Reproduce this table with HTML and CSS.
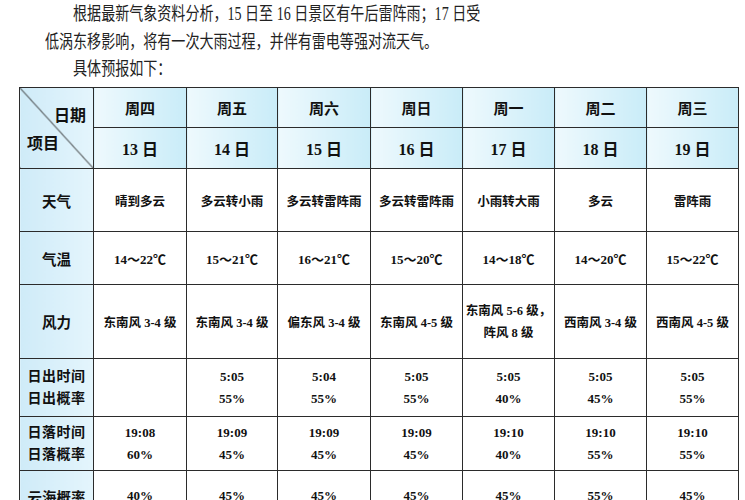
FILE: index.html
```html
<!DOCTYPE html>
<html lang="zh-CN">
<head>
<meta charset="utf-8">
<title>景区天气预报</title>
<link rel="stylesheet" href="styles.css">
</head>
<body>
<div class="intro">
  <p class="para">根据最新气象资料分析，15 日至 16 日景区有午后雷阵雨；17 日受<br>低涡东移影响，将有一次大雨过程，并伴有雷电等强对流天气。</p>
  <p class="para">具体预报如下：</p>
</div>
<table class="forecast">
  <colgroup>
    <col class="c-label">
    <col class="c93"><col class="c91"><col class="c93"><col class="c92"><col class="c92"><col class="c92"><col class="c92">
  </colgroup>
  <tr class="r-week">
    <td class="corner" rowspan="2">
      <div class="corner-in">
        <span class="corner-date">日期</span>
        <span class="corner-item">项目</span>
      </div>
    </td>
    <td class="head">周四</td><td class="head">周五</td><td class="head">周六</td><td class="head">周日</td><td class="head">周一</td><td class="head">周二</td><td class="head">周三</td>
  </tr>
  <tr class="r-date">
    <td class="head date">13 日</td><td class="head date">14 日</td><td class="head date">15 日</td><td class="head date">16 日</td><td class="head date">17 日</td><td class="head date">18 日</td><td class="head date">19 日</td>
  </tr>
  <tr class="r-weather">
    <td class="label">天气</td>
    <td>晴到多云</td><td>多云转小雨</td><td>多云转雷阵雨</td><td>多云转雷阵雨</td><td>小雨转大雨</td><td>多云</td><td>雷阵雨</td>
  </tr>
  <tr class="r-temp">
    <td class="label">气温</td>
    <td class="num">14～22℃</td><td class="num">15～21℃</td><td class="num">16～21℃</td><td class="num">15～20℃</td><td class="num">14～18℃</td><td class="num">14～20℃</td><td class="num">15～22℃</td>
  </tr>
  <tr class="r-wind">
    <td class="label">风力</td>
    <td>东南风 3-4 级</td><td>东南风 3-4 级</td><td>偏东风 3-4 级</td><td>东南风 4-5 级</td><td class="two">东南风 5-6 级，<br>阵风 8 级</td><td>西南风 3-4 级</td><td>西南风 4-5 级</td>
  </tr>
  <tr class="r-rise">
    <td class="label two-label">日出时间<br>日出概率</td>
    <td class="num two-num"></td><td class="num two-num">5:05<br>55%</td><td class="num two-num">5:04<br>55%</td><td class="num two-num">5:05<br>55%</td><td class="num two-num">5:05<br>40%</td><td class="num two-num">5:05<br>45%</td><td class="num two-num">5:05<br>55%</td>
  </tr>
  <tr class="r-set">
    <td class="label two-label">日落时间<br>日落概率</td>
    <td class="num two-num">19:08<br>60%</td><td class="num two-num">19:09<br>45%</td><td class="num two-num">19:09<br>45%</td><td class="num two-num">19:09<br>45%</td><td class="num two-num">19:10<br>40%</td><td class="num two-num">19:10<br>55%</td><td class="num two-num">19:10<br>55%</td>
  </tr>
  <tr class="r-sea">
    <td class="label">云海概率</td>
    <td class="num">40%</td><td class="num">45%</td><td class="num">45%</td><td class="num">45%</td><td class="num">45%</td><td class="num">55%</td><td class="num">45%</td>
  </tr>
</table>
</body>
</html>
```

FILE: styles.css
```css
html, body {
  margin: 0;
  padding: 0;
  background: #fff;
  overflow: hidden;
}

body {
  font-family: "Liberation Serif", "Noto Sans CJK SC", serif;
  color: #1e1e1e;
}

.intro {
  padding-top: 1px;
  height: 86px;
}

.para {
  margin: 0 0 0 45px;
  font-family: "Liberation Serif", "Noto Sans CJK SC", serif;
  font-size: 18px;
  line-height: 27.5px;
  text-indent: 2em;
  white-space: nowrap;
  transform: scaleX(0.78);
  transform-origin: 0 0;
  color: #222;
}

.forecast {
  margin-left: 19px;
  border-collapse: collapse;
  table-layout: fixed;
  width: 720px;
  font-family: "Liberation Serif", "Noto Sans CJK SC", sans-serif;
  font-weight: bold;
  color: #111;
}

.c-label { width: 74px; }
.c93 { width: 93px; }
.c91 { width: 91px; }
.c92 { width: 92px; }

.forecast td {
  border: 1px solid #2b2b2b;
  text-align: center;
  vertical-align: middle;
  padding: 0;
  font-size: 12.5px;
  background: #fff;
}

.forecast td.head {
  font-size: 15px;
  background: linear-gradient(to right, #eef9fd, #c9ecf8);
}

.forecast td.date {
  font-size: 16px;
}

.forecast td.label {
  font-size: 14.5px;
  background: linear-gradient(to right, #cfebf8, #e4f5fc);
}

.forecast td.num {
  font-size: 13px;
}

.forecast td.two-num,
.forecast td.two {
  line-height: 22px;
}

.forecast td.two-label {
  line-height: 22px;
  font-size: 14px;
  letter-spacing: 0.5px;
}

.forecast td.corner {
  background:
    linear-gradient(to top right, transparent calc(50% - 0.8px), #2b2b2b 50%, transparent calc(50% + 0.8px)),
    linear-gradient(to right, #cfebf8, #e4f5fc);
}

.corner-in {
  display: flex;
  flex-direction: column;
  height: 80px;
  font-size: 16px;
  line-height: 18px;
}

.corner-date {
  align-self: flex-end;
  margin-top: 19px;
  margin-right: 7px;
}

.corner-item {
  align-self: flex-start;
  margin-top: 10px;
  margin-left: 7px;
}

.r-week td { height: 39px; }
.r-date td { height: 40px; }
.r-weather td { height: 62px; }
.r-temp td { height: 52px; }
.r-wind td { height: 73px; }
.r-rise td { height: 57px; }
.r-set td { height: 53px; }
.r-sea td { height: 50px; }
```
